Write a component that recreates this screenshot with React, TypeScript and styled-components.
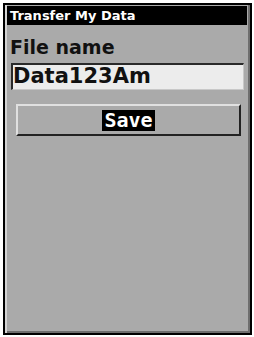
import React from "react";
import styled, { createGlobalStyle } from "styled-components";

const Global = createGlobalStyle`
  html, body { margin: 0; padding: 0; background: #ffffff; }
  body { width: 254px; height: 337px; overflow: hidden; }
`;

const Screen = styled.div`
  box-sizing: border-box;
  margin: 3px 2px 0 3px;
  width: 249px;
  height: 332px;
  border: 2px solid #000;
  background: #aaaaaa;
  display: flex;
  flex-direction: column;
  box-shadow: inset 2px 0 0 #d4d4d4, inset -2px -2px 0 #6e6e6e;
`;

const TitleBar = styled.div`
  background: #000;
  color: #fff;
  margin: 1px 3px 0 2px;
  height: 19px;
  display: flex;
  align-items: center;
  padding-left: 3px;
  font-family: "DejaVu Sans", sans-serif;
  font-weight: bold;
  font-size: 13px;
  line-height: 19px;
  letter-spacing: 0;
`;

const Body = styled.div`
  display: flex;
  flex-direction: column;
  padding: 0 6px;
`;

const Label = styled.div`
  font-family: "DejaVu Sans", sans-serif;
  font-weight: bold;
  font-size: 19px;
  line-height: 22px;
  color: #111;
  margin: 11px 0 0 -1px;
`;

const Field = styled.div`
  box-sizing: border-box;
  height: 27px;
  margin: 5px 0 0 0;
  width: 233px;
  background: #ececec;
  border-top: 2px solid #2a2a2a;
  border-left: 2px solid #2a2a2a;
  border-right: 1px solid #c8c8c8;
  border-bottom: 1px solid #c8c8c8;
  font-family: "DejaVu Sans", sans-serif;
  font-weight: bold;
  font-size: 21px;
  line-height: 23px;
  color: #111;
  padding-left: 0;
`;

const Button = styled.div`
  box-sizing: border-box;
  margin: 14px 0 0 5px;
  width: 225px;
  height: 32px;
  background: #aaaaaa;
  border-top: 2px solid #e0e0e0;
  border-left: 2px solid #e0e0e0;
  border-right: 2px solid #222;
  border-bottom: 2px solid #222;
  display: flex;
  align-items: center;
  justify-content: center;
`;

const ButtonLabel = styled.span`
  background: #000;
  color: #fff;
  font-family: "DejaVu Sans Mono", monospace;
  font-weight: bold;
  font-size: 20px;
  line-height: 21px;
  padding: 0 2px;
`;

export default function App() {
  return (
    <>
      <Global />
      <Screen>
        <TitleBar>Transfer My Data</TitleBar>
        <Body>
          <Label>File name</Label>
          <Field>Data123Am</Field>
          <Button>
            <ButtonLabel>Save</ButtonLabel>
          </Button>
        </Body>
      </Screen>
    </>
  );
}
